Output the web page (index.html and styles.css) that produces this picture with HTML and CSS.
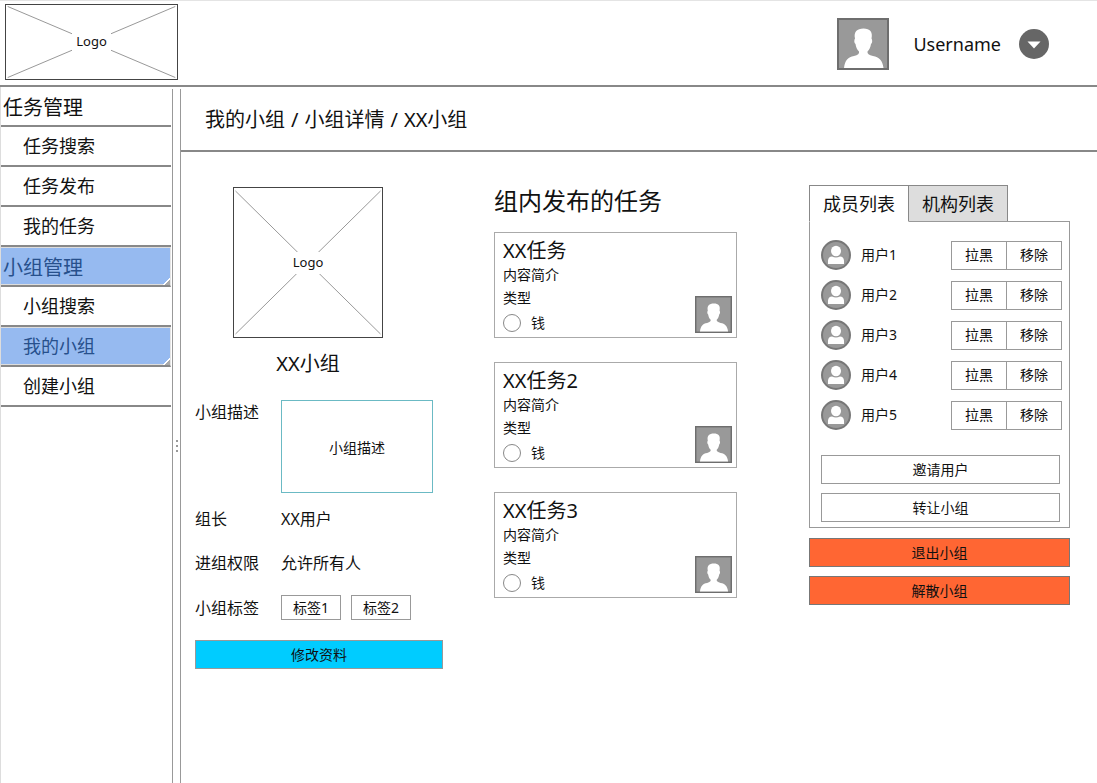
FILE: index.html
```html
<!DOCTYPE html>
<html lang="zh-CN">
<head>
<meta charset="utf-8">
<meta name="viewport" content="width=device-width, initial-scale=1">
<title>XX小组</title>
<link rel="stylesheet" href="styles.css">
</head>
<body>
<svg class="sprite" aria-hidden="true">
  <symbol id="portrait" viewBox="0 0 52 52">
    <rect x="1" y="1" width="50" height="50" fill="#999" stroke="#6e6e6e" stroke-width="2"/>
    <path fill="#fff" d="M7 50C8 42 11 39 17 38C21 37 22.500 35.500 22 33.500C20 31.500 19 29 18.500 26C17 25 17 22 18 20.500C16.500 14 20 10.500 26.500 10.500C33 10.500 36 14 34.500 20.500C35.500 22 35.500 25 34 26C33.500 29 32.500 31.500 30.500 33.500C30 35.500 32 37 36 38C42 39 45.500 42 46.500 50Z"/>
  </symbol>
  <symbol id="member" viewBox="0 0 30 30">
    <circle cx="15" cy="15" r="14" fill="#999" stroke="#777" stroke-width="2"/>
    <ellipse cx="15" cy="11" rx="5" ry="5.200" fill="#fff"/>
    <path fill="#fff" d="M7 24V20.500Q7.500 16.500 11 16.500Q15 18.500 19 16.500Q22.500 16.500 23 20.500V24Z"/>
  </symbol>
  <symbol id="cross" viewBox="0 0 100 100" preserveAspectRatio="none">
    <path d="M1 2L99 98M99 2L1 98" fill="none" stroke="#999" vector-effect="non-scaling-stroke"/>
  </symbol>
</svg>
<header class="header">
  <div class="placeholder header-logo"><svg><use href="#cross"/></svg><span>Logo</span></div>
  <div class="account">
    <svg class="account-photo"><use href="#portrait"/></svg>
    <span class="account-name">Username</span>
    <button class="account-menu" type="button" aria-label="菜单"><svg viewBox="0 0 30 30"><circle cx="15" cy="15" r="15" fill="#666"/><path d="M8.500 12.500h13L15 19.500z" fill="#fff"/></svg></button>
  </div>
</header>
<div class="shell">
  <nav class="nav">
    <a class="nav-item nav-group" href="#">任务管理</a>
    <a class="nav-item" href="#">任务搜索</a>
    <a class="nav-item" href="#">任务发布</a>
    <a class="nav-item" href="#">我的任务</a>
    <a class="nav-item nav-group selected" href="#">小组管理</a>
    <a class="nav-item" href="#">小组搜索</a>
    <a class="nav-item selected" href="#">我的小组</a>
    <a class="nav-item" href="#">创建小组</a>
  </nav>
  <div class="splitter"><i></i><i></i><i></i></div>
  <main class="main">
    <div class="breadcrumb"><span>我的小组</span><span>/</span><span>小组详情</span><span>/</span><span>XX小组</span></div>
    <div class="columns">
      <section class="profile">
        <div class="identity">
          <div class="placeholder group-logo"><svg><use href="#cross"/></svg><span>Logo</span></div>
          <h1 class="group-name">XX小组</h1>
        </div>
        <div class="fields">
          <label class="describe-label" for="describe">小组描述</label>
          <textarea class="describe" id="describe">小组描述</textarea>
          <span>组长</span><span>XX用户</span>
          <span>进组权限</span><span>允许所有人</span>
          <span>小组标签</span>
          <div class="tags"><button class="button" type="button">标签1</button><button class="button" type="button">标签2</button></div>
        </div>
        <button class="button primary" type="button">修改资料</button>
      </section>
      <section class="tasks">
        <h2 class="tasks-title">组内发布的任务</h2>
        <article class="card">
          <div><h3>XX任务</h3><p>内容简介</p><p>类型</p><label class="pay"><input type="radio" name="task1">钱</label></div>
          <svg class="card-photo"><use href="#portrait"/></svg>
        </article>
        <article class="card">
          <div><h3>XX任务2</h3><p>内容简介</p><p>类型</p><label class="pay"><input type="radio" name="task2">钱</label></div>
          <svg class="card-photo"><use href="#portrait"/></svg>
        </article>
        <article class="card">
          <div><h3>XX任务3</h3><p>内容简介</p><p>类型</p><label class="pay"><input type="radio" name="task3">钱</label></div>
          <svg class="card-photo"><use href="#portrait"/></svg>
        </article>
      </section>
      <section class="people">
        <div class="tabs" role="tablist">
          <button class="tab active" type="button" role="tab" aria-selected="true">成员列表</button>
          <button class="tab" type="button" role="tab" aria-selected="false">机构列表</button>
        </div>
        <div class="panel">
          <ul class="members">
            <li><svg><use href="#member"/></svg><span>用户1</span><button class="button" type="button">拉黑</button><button class="button" type="button">移除</button></li>
            <li><svg><use href="#member"/></svg><span>用户2</span><button class="button" type="button">拉黑</button><button class="button" type="button">移除</button></li>
            <li><svg><use href="#member"/></svg><span>用户3</span><button class="button" type="button">拉黑</button><button class="button" type="button">移除</button></li>
            <li><svg><use href="#member"/></svg><span>用户4</span><button class="button" type="button">拉黑</button><button class="button" type="button">移除</button></li>
            <li><svg><use href="#member"/></svg><span>用户5</span><button class="button" type="button">拉黑</button><button class="button" type="button">移除</button></li>
          </ul>
          <div class="stack">
            <button class="button" type="button">邀请用户</button>
            <button class="button" type="button">转让小组</button>
          </div>
        </div>
        <div class="stack">
          <button class="button danger" type="button">退出小组</button>
          <button class="button danger" type="button">解散小组</button>
        </div>
      </section>
    </div>
  </main>
</div>
</body>
</html>
```

FILE: styles.css
```css
* { box-sizing: border-box; }
body {
  margin: 0;
  min-height: 100vh;
  display: flex;
  flex-direction: column;
  border-top: 1px solid #e4e4e4;
  color: #111;
  background: #fff;
  font: 14px/20px "Noto Sans", "Noto Sans CJK SC", sans-serif;
}
h1, h2, h3, p, ul { margin: 0; padding: 0; font-weight: 400; }
button, input, textarea { font: inherit; color: inherit; margin: 0; }
.sprite { position: absolute; width: 0; height: 0; }

.placeholder { display: grid; place-items: center; border: 1px solid #444; font-size: 13px; }
.placeholder > * { grid-area: 1 / 1; }
.placeholder svg { width: 100%; height: 100%; min-height: 0; }
.placeholder span { background: #fff; padding: 0 4px 2px; }

.header {
  display: flex;
  align-items: flex-start;
  justify-content: space-between;
  height: 86px;
  padding: 3px 48px 0 5px;
  border-bottom: 2px solid #888;
}
.header-logo { width: 173px; height: 76px; grid-template-rows: 74px; }
.account { display: flex; align-items: center; height: 80px; font-size: 18px; }
.account-photo { width: 52px; height: 52px; margin-right: 24px; }
.account-name { margin-right: 18px; }
.account-menu { width: 30px; height: 30px; padding: 0; border: 0; background: none; }
.account-menu svg { display: block; }

.shell { flex: 1; display: flex; }
.nav { width: 172px; padding-right: 1px; border-left: 1px solid #ddd; }
.nav-item {
  display: flex;
  align-items: center;
  position: relative;
  height: 40px;
  padding-left: 22px;
  border-bottom: 2px solid #888;
  color: #111;
  font-size: 18px;
  text-decoration: none;
}
.nav-group { padding: 4px 0 0 2px; font-size: 20px; }
.selected { color: #27508c; background: #96baf0; border-right: 1px solid #e4e4e4; box-shadow: inset 0 1px #ddd, inset 0 -1px #ddd; }
.selected::after {
  content: "";
  position: absolute;
  right: 0;
  bottom: 0;
  width: 7px;
  height: 7px;
  background: linear-gradient(135deg, transparent 45%, #fff 45% 60%, #aaa 60%);
}
.splitter {
  display: flex;
  flex-direction: column;
  align-items: center;
  justify-content: center;
  gap: 3px;
  width: 9px;
  margin-top: 2px;
  padding-top: 20px;
  border: solid #999;
  border-width: 0 1px;
}
.splitter i { width: 2px; height: 2px; background: #999; }

.main { flex: 1; min-width: 0; }
.breadcrumb { display: flex; align-items: center; gap: 6px; height: 65px; padding: 2px 0 0 24px; border-bottom: 2px solid #888; font-size: 20px; }
.columns {
  display: grid;
  grid-template-columns: minmax(0, 299fr) minmax(0, 315fr) minmax(0, 261fr);
  align-items: start;
  padding: 33px 27px 24px 14px;
}

.profile { display: flex; flex-direction: column; padding: 2px 51px 0 0; }
.identity { display: flex; flex-direction: column; align-items: center; padding-right: 22px; }
.group-logo { width: 150px; height: 151px; grid-template-rows: 149px; }
.group-name { margin-top: 12px; font-size: 20px; line-height: 28px; }
.fields { display: grid; grid-template-columns: 86px 1fr; align-items: center; row-gap: 20px; margin: 22px 0 20px; font-size: 16px; line-height: 24px; }
.fields .describe-label { align-self: start; }
.describe {
  width: 152px;
  height: 93px;
  margin-bottom: -6px;
  padding: 37px 4px 0;
  border: 1px solid #6bbac4;
  background: #fff;
  text-align: center;
  font-size: 14px;
  line-height: 20px;
  resize: none;
}
.button { height: 29px; padding: 0; border: 1px solid #999; background: #fff; font-size: 14px; line-height: 20px; }
.tags { display: flex; gap: 10px; }
.tags .button { width: 60px; height: 25px; }
.primary { background: #00ccff; }

.tasks { display: flex; flex-direction: column; gap: 24px; padding-right: 72px; }
.tasks-title { margin-bottom: -9px; font-size: 24px; line-height: 32px; }
.card { display: flex; justify-content: space-between; align-items: flex-end; height: 106px; padding: 6px 4px 4px 8px; border: 1px solid #aaa; }
.card > div { align-self: flex-start; }
.card h3 { font-size: 20px; line-height: 24px; }
.card p { line-height: 23px; }
.card-photo { width: 37px; height: 37px; }
.pay { display: flex; align-items: center; gap: 10px; line-height: 28px; }
.pay input { appearance: none; width: 18px; height: 18px; border: 1px solid #888; border-radius: 50%; }

.people { display: flex; flex-direction: column; }
.tabs { display: flex; }
.tab { width: 100px; height: 37px; padding: 0; border: 1px solid #888; background: #ddd; font-size: 18px; line-height: 24px; }
.tab + .tab { margin-left: -1px; }
.tab.active { z-index: 1; background: #fff; border-bottom-color: #fff; }
.panel { margin-top: -1px; padding: 13px 7px 5px 11px; border: 1px solid #999; }
.members { margin-bottom: 20px; list-style: none; }
.members li { display: flex; align-items: center; height: 40px; }
.members svg { width: 30px; height: 30px; }
.members span { flex: 1; margin-left: 10px; }
.members .button { width: 56px; }
.members .button + .button { margin-left: -1px; }
.stack { display: flex; flex-direction: column; gap: 9px; }
.panel .stack { padding-right: 2px; }
.panel + .stack { margin-top: 10px; }
.danger { background: #ff6633; border-color: #777; }
```
